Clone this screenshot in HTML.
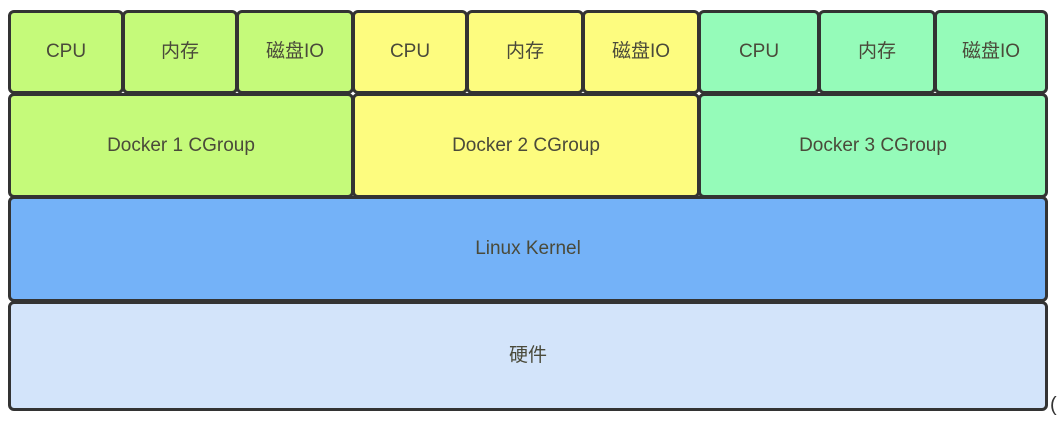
<!DOCTYPE html><html><head><style>
body{margin:0;width:1058px;height:422px;background:#fff;position:relative;overflow:hidden;font-family:"Liberation Sans","Noto Sans CJK SC",sans-serif;}
.b{position:absolute;box-sizing:border-box;border:3px solid #333;border-radius:6px;display:flex;align-items:center;justify-content:center;color:#4a4a3a;font-size:19px;}
.b span{display:block;line-height:24px;height:24px;}
.g{background:#c5fa7a}.y{background:#fdfc7f}.t{background:#95fbb9}.k{background:#74b2f8}.h{background:#d3e4fa}
</style></head><body>
<div class="b g" style="left:8px;top:10px;width:116px;height:84px"><span>CPU</span></div>
<div class="b g" style="left:122px;top:10px;width:116px;height:84px"><span>内存</span></div>
<div class="b g" style="left:236px;top:10px;width:118px;height:84px"><span>磁盘IO</span></div>
<div class="b y" style="left:352px;top:10px;width:116px;height:84px"><span>CPU</span></div>
<div class="b y" style="left:466px;top:10px;width:118px;height:84px"><span>内存</span></div>
<div class="b y" style="left:582px;top:10px;width:118px;height:84px"><span>磁盘IO</span></div>
<div class="b t" style="left:698px;top:10px;width:122px;height:84px"><span>CPU</span></div>
<div class="b t" style="left:818px;top:10px;width:118px;height:84px"><span>内存</span></div>
<div class="b t" style="left:934px;top:10px;width:114px;height:84px"><span>磁盘IO</span></div>
<div class="b g" style="left:8px;top:93px;width:346px;height:105px"><span>Docker 1 CGroup</span></div>
<div class="b y" style="left:352px;top:93px;width:348px;height:105px"><span>Docker 2 CGroup</span></div>
<div class="b t" style="left:698px;top:93px;width:350px;height:105px"><span>Docker 3 CGroup</span></div>
<div class="b k" style="left:8px;top:196px;width:1040px;height:106px"><span>Linux Kernel</span></div>
<div class="b h" style="left:8px;top:301px;width:1040px;height:110px"><span>硬件</span></div>
<div style="position:absolute;left:1050px;top:394px;font-size:20px;color:#333">(</div>
</body></html>
